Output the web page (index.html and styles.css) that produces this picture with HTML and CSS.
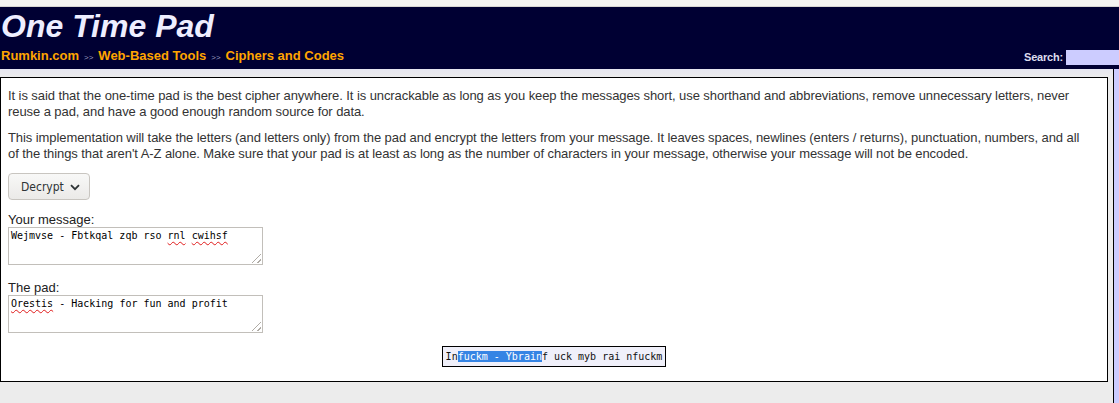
FILE: index.html
```html
<!DOCTYPE html>
<html>
<head>
<meta charset="utf-8">
<title>One Time Pad</title>
<link rel="stylesheet" href="styles.css">
</head>
<body>
<div class="topstrip"></div>
<header class="header">
  <h1 class="title">One Time Pad</h1>
  <div class="navrow">
    <nav class="crumbs">
      <a href="#">Rumkin.com</a><span class="sep">&gt;&gt;</span><a href="#">Web-Based Tools</a><span class="sep">&gt;&gt;</span><a href="#">Ciphers and Codes</a>
    </nav>
    <div class="search"><span class="search-label">Search:</span><span class="search-input"></span></div>
  </div>
</header>
<div class="layout">
  <main class="main">
    <div class="box">
      <p class="para">It is said that the one-time pad is the best cipher anywhere. It is uncrackable as long as you keep the messages short, use shorthand and abbreviations, remove unnecessary letters, never reuse a pad, and have a good enough random source for data.</p>
      <p class="para">This implementation will take the letters (and letters only) from the pad and encrypt the letters from your message. It leaves spaces, newlines (enters / returns), punctuation, numbers, and all of the things that aren't A-Z alone. Make sure that your pad is at least as long as the number of characters in your message, otherwise your message will not be encoded.</p>
      <div class="btnrow">
        <span class="dropbtn">Decrypt <svg class="chev" width="10" height="7" viewBox="0 0 10 7"><path d="M1 1.2 L5 5.2 L9 1.2" fill="none" stroke="#2e3436" stroke-width="1.8"/></svg></span>
      </div>
      <div class="field">
        <div class="label">Your message:</div>
        <div class="ta">Wejmvse - Fbtkqal zqb rso <span class="sq">rnl</span> <span class="sq">cwihsf</span><span class="grip"></span></div>
      </div>
      <div class="field">
        <div class="label">The pad:</div>
        <div class="ta"><span class="sq">Orestis</span> - Hacking for fun and profit<span class="grip"></span></div>
      </div>
      <div class="outrow">
        <div class="out">In<span class="sel">fuckm - Ybrain</span>f uck myb rai nfuckm</div>
      </div>
    </div>
  </main>
  <aside class="side"></aside>
</div>
</body>
</html>
```
FILE: styles.css
```css
html, body { margin: 0; padding: 0; }
body {
  background: #ececec;
  font-family: "Liberation Sans", Arial, sans-serif;
  width: 1119px;
  height: 403px;
  overflow: hidden;
}
.topstrip {
  height: 6px;
  background: #f5f4f2;
  border-bottom: 1px solid #d8d6d2;
}
.header {
  background: #000033;
  height: 62px;
  box-sizing: border-box;
  padding-top: 1px;
}
.title {
  margin: 0;
  padding-left: 1px;
  font-size: 32px;
  line-height: 36px;
  font-style: italic;
  font-weight: bold;
  color: #eeeeff;
  letter-spacing: 0;
}
.navrow {
  display: flex;
  align-items: center;
  justify-content: space-between;
  margin-top: 4px;
}
.crumbs {
  padding-left: 1px;
  font-size: 13px;
  font-weight: bold;
  line-height: 16px;
}
.crumbs a { color: #ffa500; text-decoration: none; }
.sep {
  color: #9999bb;
  font-size: 8px;
  font-weight: normal;
  margin: 0 5px 0 5px;
}
.search { display: flex; align-items: center; }
.search-label {
  color: #ddddee;
  font-size: 11px;
  font-weight: bold;
  margin-right: 3px;
  letter-spacing: -0.2px;
}
.search-input {
  width: 53px;
  height: 15px;
  background: #ccccff;
}
.layout {
  display: flex;
  height: 334px;
}
.main {
  flex: 1;
  background: #ececec;
  padding-top: 8px;
  background-image: linear-gradient(#e6e6f0, #ececec 8px);
}
.box {
  background: #ffffff;
  border: 1px solid #000;
  margin-right: 5px;
  height: 305px;
  box-sizing: border-box;
  padding: 10px 16px 0 7px;
}
.para {
  margin: 0 0 10px 0;
  font-size: 13px;
  line-height: 16px;
  color: #333333;
  letter-spacing: -0.08px;
}
.btnrow { margin-top: 11px; }
.dropbtn {
  display: inline-flex;
  align-items: center;
  gap: 6px;
  box-sizing: border-box;
  width: 82px;
  height: 27px;
  padding-left: 12px;
  border: 1px solid #c8c5c0;
  border-radius: 4px;
  background: linear-gradient(#f8f8f7, #ebeae8);
  font-family: "DejaVu Sans Condensed", "DejaVu Sans", sans-serif;
  font-size: 12px;
  color: #2e3436;
}
.chev { margin-top: 1px; }
.field { margin-top: 12px; }
.field + .field { margin-top: 15px; }
.label {
  font-size: 13px;
  line-height: 15px;
  color: #222;
}
.ta {
  position: relative;
  width: 255px;
  height: 38px;
  box-sizing: border-box;
  border: 1px solid #c2bfba;
  padding: 1px 2px;
  font-family: "DejaVu Sans Mono", monospace;
  font-size: 10px;
  line-height: 13px;
  color: #000;
  background: #fff;
}
.sq {
  text-decoration: underline wavy #e01b1b;
  text-decoration-thickness: 1px;
  text-underline-offset: 2px;
}
.grip {
  position: absolute;
  right: 1px;
  bottom: 1px;
  width: 12px;
  height: 12px;
  background: repeating-linear-gradient(135deg, transparent 0 2px, #b0aca6 2px 3px, transparent 3px 4px);
  clip-path: polygon(100% 0, 100% 100%, 0 100%);
}
.outrow {
  display: flex;
  justify-content: center;
  margin-top: 13px;
  margin-right: -9px;
}
.out {
  box-sizing: border-box;
  height: 21px;
  border: 1px solid #000;
  background: #f0f0fa;
  padding: 2px 3px;
  font-family: "DejaVu Sans Mono", monospace;
  font-size: 10px;
  line-height: 15px;
  color: #111;
}
.sel { background: #3584e4; color: #fff; }
.side {
  width: 5px;
  border-left: 1px solid #000;
  background: #ccccff;
}
```
